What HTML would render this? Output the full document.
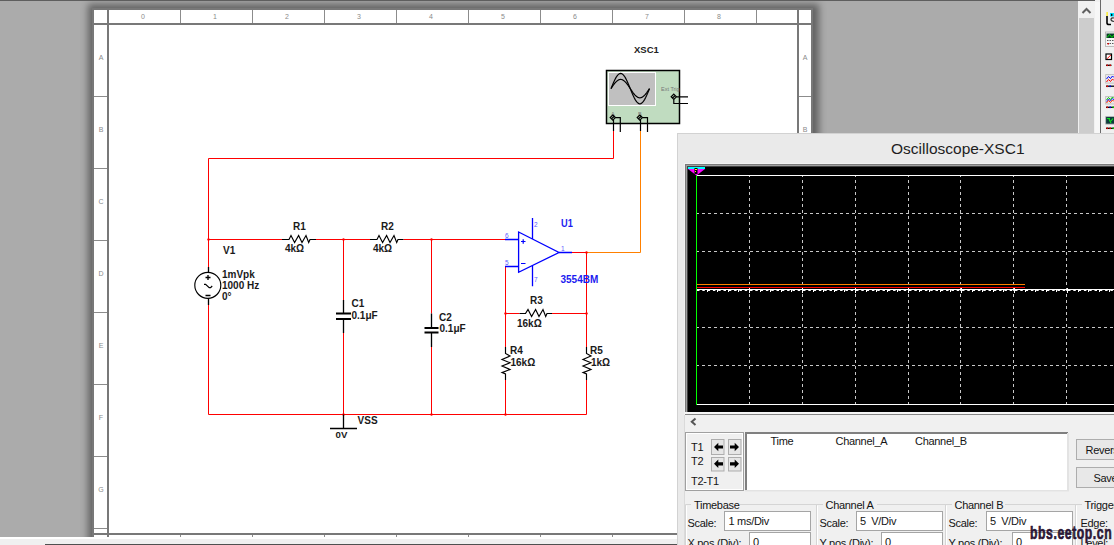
<!DOCTYPE html>
<html><head><meta charset="utf-8">
<style>
html,body{margin:0;padding:0}
body{width:1114px;height:545px;overflow:hidden;position:relative;background:#ababab;font-family:"Liberation Sans",sans-serif}
.abs{position:absolute}
#topbar{left:0;top:0;width:1095px;height:1px;background:#5e5e5e}
#sheetshadow{left:92px;top:8px;width:721px;height:560px;box-shadow:1px 1px 7px 5px rgba(0,0,0,.42);background:#fff}
svg{position:absolute;left:0;top:0}
#bottomstrip{left:0;top:537px;width:1114px;height:8px;background:#f0f0f0;border-top:2px solid #fff;box-sizing:border-box}
#bottomline{left:45px;top:544px;width:1069px;height:1px;background:#505050}
#rpanel{left:1078px;top:0;width:36px;height:545px;background:#f0f0f0}
#scope{left:677px;top:133px;width:460px;height:420px;background:#eaeaea;border:1px solid #d2d2d2;box-sizing:border-box}
.t{position:absolute;font-size:11px;color:#000;white-space:nowrap;line-height:1}
</style></head><body>
<div class="abs" id="sheetshadow"></div>
<div class="abs" id="topbar"></div>
<div class="abs" id="rpanel"></div>
<svg width="1114" height="545" viewBox="0 0 1114 545" font-family="Liberation Sans, sans-serif">
  <!-- sheet border -->
  <rect x="93" y="9" width="719" height="540" fill="#fff" stroke="#787878" stroke-width="2"/>
  <g fill="#787878">
    <rect x="94" y="23" width="717" height="2"/>
    <rect x="107" y="10" width="2" height="527"/>
    <rect x="797" y="10" width="2" height="527"/>
    <rect x="94" y="533" width="717" height="2"/>
  </g>
  <g fill="#8c8c8c">
    <rect x="180" y="10" width="1" height="13"/><rect x="252" y="10" width="1" height="13"/>
    <rect x="324" y="10" width="1" height="13"/><rect x="396" y="10" width="1" height="13"/>
    <rect x="468" y="10" width="1" height="13"/><rect x="540" y="10" width="1" height="13"/>
    <rect x="612" y="10" width="1" height="13"/><rect x="684" y="10" width="1" height="13"/>
    <rect x="756" y="10" width="1" height="13"/>
    <rect x="180" y="535" width="1" height="2"/><rect x="252" y="535" width="1" height="2"/>
    <rect x="324" y="535" width="1" height="2"/><rect x="396" y="535" width="1" height="2"/>
    <rect x="468" y="535" width="1" height="2"/><rect x="540" y="535" width="1" height="2"/>
    <rect x="612" y="535" width="1" height="2"/><rect x="684" y="535" width="1" height="2"/>
    <rect x="756" y="535" width="1" height="2"/>
    <rect x="94" y="96" width="13" height="1"/><rect x="94" y="168" width="13" height="1"/>
    <rect x="94" y="240" width="13" height="1"/><rect x="94" y="312" width="13" height="1"/>
    <rect x="94" y="384" width="13" height="1"/><rect x="94" y="456" width="13" height="1"/>
    <rect x="94" y="528" width="13" height="1"/>
    <rect x="799" y="96" width="12" height="1"/><rect x="799" y="168" width="12" height="1"/>
    <rect x="799" y="240" width="12" height="1"/><rect x="799" y="312" width="12" height="1"/>
    <rect x="799" y="384" width="12" height="1"/><rect x="799" y="456" width="12" height="1"/>
    <rect x="799" y="528" width="12" height="1"/>
  </g>
  <g fill="#8a8a8a" font-size="7" text-anchor="middle">
    <text x="143" y="19">0</text><text x="215" y="19">1</text><text x="287" y="19">2</text>
    <text x="359" y="19">3</text><text x="431" y="19">4</text><text x="503" y="19">5</text>
    <text x="575" y="19">6</text><text x="647" y="19">7</text><text x="719" y="19">8</text>
    <text x="101" y="59.7">A</text><text x="101" y="131.7">B</text><text x="101" y="203.7">C</text>
    <text x="101" y="275.7">D</text><text x="101" y="347.7">E</text><text x="101" y="419.7">F</text>
    <text x="101" y="491.7">G</text>
    <text x="805" y="59.7">A</text><text x="805" y="131.7">B</text>
  </g>

  <!-- wires -->
  <g stroke="#ff0000" stroke-width="1" fill="none">
    <path d="M208.5,158.5 H613.5 V131"/>
    <path d="M208.5,158.5 V267"/>
    <path d="M208.5,305 V414.5 H586.5 V380"/>
    <path d="M208.5,239.5 H282"/>
    <path d="M316,239.5 H370"/>
    <path d="M403.5,239.5 H505"/>
    <path d="M343.5,239.5 V300"/>
    <path d="M343.5,333 V414.5"/>
    <path d="M431.5,239.5 V313.5"/>
    <path d="M431.5,347 V414.5"/>
    <path d="M505.5,266.5 V347"/>
    <path d="M505.5,380 V414.5"/>
    <path d="M505.5,313.5 H519.5"/>
    <path d="M552,313.5 H586.5"/>
    <path d="M572,252.5 H586.5 V347"/>
  </g>
  <path d="M586.5,252.5 H640.5 V131" stroke="#ff8000" stroke-width="1" fill="none"/>
  <g fill="#ff0000">
    <circle cx="208.5" cy="239.5" r="1.2"/><circle cx="343.5" cy="239.5" r="1.2"/>
    <circle cx="431.5" cy="239.5" r="1.2"/><circle cx="586.5" cy="252.5" r="1.2"/>
    <circle cx="505.5" cy="313.5" r="1.2"/><circle cx="586.5" cy="313.5" r="1.2"/>
    <circle cx="343.5" cy="414.5" r="1.2"/><circle cx="431.5" cy="414.5" r="1.2"/>
    <circle cx="505.5" cy="414.5" r="1.2"/>
  </g>

  <!-- black components -->
  <g stroke="#000" stroke-width="1.3" fill="none">
    <path d="M208.5,267 V272 M208.5,298.5 V305"/>
    <circle cx="207.8" cy="285.3" r="13" stroke-width="1.15"/>
    <path d="M205.5,277.5 H210.5 M208,275 V280 M205.5,295.5 H210.5"/>
    <path d="M204,284.3 H205.6 L209.2,287.6 H210.6 L212.2,286" stroke-width="1.2"/>
    <!-- R1 -->
    <path stroke-width="1.15" d="M282,239.5 H289 L291,235.5 L294.6,242.5 L298.6,235.5 L302,242.5 L306,235.5 L308.7,242.5 L310,239.5 H316"/>
    <!-- R2 -->
    <path stroke-width="1.15" d="M370,239.5 H377 L379,235.5 L382.6,242.5 L386.6,235.5 L390,242.5 L394,235.5 L396.7,242.5 L398,239.5 H403.5"/>
    <!-- R3 -->
    <path stroke-width="1.15" d="M519.5,313.5 H525.5 L528,309.5 L531.6,316.5 L535.6,309.5 L539,316.5 L543,309.5 L545.7,316.5 L547,313.5 H552"/>
    <!-- R4 -->
    <path stroke-width="1.15" d="M505.5,347 V353.5 L510,356 L502,359.5 L510,362.8 L502,366 L510,369.5 L502,372.6 L505.5,374 V380"/>
    <!-- R5 -->
    <path stroke-width="1.15" d="M586.5,347 V353.5 L591,356 L583,359.5 L591,362.8 L583,366 L591,369.5 L583,372.6 L586.5,374 V380"/>
    <!-- C1 -->
    <path d="M343.5,300 V313 M343.5,319 V333"/>
    <!-- C2 -->
    <path d="M431.5,313.5 V327.5 M431.5,333 V347"/>
    <!-- ground -->
    <path d="M343.5,414.5 V428.5 M330,428.5 H357"/>
  </g>
  <g fill="#000">
    <rect x="336" y="312.5" width="15" height="2"/><rect x="336" y="318" width="15" height="2"/>
    <rect x="424.5" y="327" width="14" height="2"/><rect x="424.5" y="331.5" width="14" height="2"/>
  </g>
  <g fill="#1a1a1a" font-size="10" font-weight="bold">
    <text x="293" y="230">R1</text>
    <text x="285" y="252">4kΩ</text>
    <text x="381" y="230">R2</text>
    <text x="373" y="252">4kΩ</text>
    <text x="223" y="254">V1</text>
    <text x="222" y="277.5">1mVpk</text>
    <text x="222" y="288.5">1000 Hz</text>
    <text x="222" y="299.5">0°</text>
    <text x="351.5" y="306.5">C1</text>
    <text x="351.5" y="319">0.1μF</text>
    <text x="439" y="320.5">C2</text>
    <text x="439.5" y="332">0.1μF</text>
    <text x="530" y="304">R3</text>
    <text x="517" y="326.5">16kΩ</text>
    <text x="510" y="353.5">R4</text>
    <text x="510.5" y="365.5">16kΩ</text>
    <text x="590" y="353.5">R5</text>
    <text x="591" y="365.5">1kΩ</text>
    <text x="357.5" y="423.6" font-size="10" textLength="20.2" lengthAdjust="spacing">VSS</text>
    <text x="335.6" y="437.7" font-size="9.6" textLength="11.8" lengthAdjust="spacingAndGlyphs">0V</text>
    <text x="634" y="52.5" font-size="9.6" fill="#222" textLength="24.8" lengthAdjust="spacingAndGlyphs">XSC1</text>
  </g>

  <!-- op amp -->
  <g stroke="#0000ff" stroke-width="1.3" fill="none">
    <path d="M518.6,232 L559,252.5 L518.6,272.3 Z"/>
    <path d="M505,239.5 H518.6 M505,266.5 H518.6 M532.5,218 V239 M532.5,266 V286.3 M559,252.5 H572"/>
    <path d="M521,241.5 H525.5 M523.2,239.3 V243.7 M521,263.5 H525.5" stroke-width="1.2"/>
  </g>
  <g fill="#5a5aff" font-size="6.5">
    <text x="505" y="238">6</text><text x="505" y="264.5">5</text>
    <text x="534" y="227">2</text><text x="534" y="282">7</text><text x="561" y="251">1</text>
  </g>
  <g fill="#1c1cf0" font-size="10" font-weight="bold">
    <text x="561" y="227.2" font-size="10" textLength="11.8" lengthAdjust="spacingAndGlyphs">U1</text>
    <text x="560.5" y="282.8">3554BM</text>
  </g>

  <!-- instrument -->
  <rect x="606.5" y="70.5" width="73" height="53" fill="#c0dcc0" stroke="#000" stroke-width="1.5"/>
  <rect x="608.5" y="72.5" width="47" height="33" fill="#c0c0c0" stroke="#fff" stroke-width="1"/>
  <path d="M611.00,88.60 L611.96,86.22 L612.92,83.90 L613.89,81.70 L614.85,79.67 L615.81,77.85 L616.77,76.30 L617.74,75.06 L618.70,74.14 L619.66,73.59 L620.62,73.40 L621.59,73.59 L622.55,74.14 L623.51,75.06 L624.48,76.30 L625.44,77.85 L626.40,79.67 L627.36,81.70 L628.33,83.90 L629.29,86.22 L630.25,88.60 L631.21,90.98 L632.17,93.30 L633.14,95.50 L634.10,97.53 L635.06,99.35 L636.02,100.90 L636.99,102.14 L637.95,103.06 L638.91,103.61 L639.88,103.80 L640.84,103.61 L641.80,103.06 L642.76,102.14 L643.73,100.90 L644.69,99.35 L645.65,97.53 L646.61,95.50 L647.58,93.30 L648.54,90.98 L649.50,88.60" stroke="#000" stroke-width="1.2" fill="none"/>
  <path d="M611.00,88.60 L611.96,87.16 L612.92,85.76 L613.89,84.42 L614.85,83.19 L615.81,82.09 L616.77,81.16 L617.74,80.40 L618.70,79.85 L619.66,79.51 L620.62,79.40 L621.59,79.51 L622.55,79.85 L623.51,80.40 L624.48,81.16 L625.44,82.09 L626.40,83.19 L627.36,84.42 L628.33,85.76 L629.29,87.16 L630.25,88.60 L631.21,90.04 L632.17,91.44 L633.14,92.78 L634.10,94.01 L635.06,95.11 L636.02,96.04 L636.99,96.80 L637.95,97.35 L638.91,97.69 L639.88,97.80 L640.84,97.69 L641.80,97.35 L642.76,96.80 L643.73,96.04 L644.69,95.11 L645.65,94.01 L646.61,92.78 L647.58,91.44 L648.54,90.04 L649.50,88.60" stroke="#000" stroke-width="1.2" fill="none"/>
  <g fill="#777" font-size="5.5">
    <text x="661" y="91">Ext Trig</text>
    <text x="611" y="115.5">A</text><text x="638" y="115.5">B</text>
  </g>
  <g stroke="#000" stroke-width="1.2" fill="none">
    <path d="M612.8,115 L615.4,117.6 L612.8,120.2 L610.2,117.6 Z M611.3,119 L614.5,116"/>
    <path d="M639.8,115 L642.4,117.6 L639.8,120.2 L637.2,117.6 Z M638.3,119 L641.5,116"/>
    <path d="M673.8,94.2 L676.4,96.8 L673.8,99.4 L671.2,96.8 Z M672.3,98.2 L675.5,95.3"/>
    <path d="M613.5,120 V131 M615.4,117.6 H620.3 V132 M642.4,117.6 H647.5 V132 M640.5,120 V131"/>
    <path d="M676.4,96.8 H688 M673.8,99.4 V103.5 H688"/>
  </g>
</svg>

<div class="abs" id="bottomstrip"></div>
<div class="abs" id="bottomline"></div>

<!-- right scrollbar & panel -->
<svg width="1114" height="545" style="pointer-events:none">
  <rect x="1078" y="1" width="17" height="536" fill="#f0f0f0"/>
  <rect x="1078" y="0" width="17" height="1" fill="#5e5e5e"/>
  <rect x="1079" y="18" width="15" height="519" fill="#cdcdcd"/>
  <path d="M1082.5,13 L1086.5,9 L1090.5,13" stroke="#606060" stroke-width="2" fill="none"/>
  <rect x="1095" y="2" width="5" height="535" fill="#f7f7f7"/>
  <rect x="1100" y="0" width="1" height="537" fill="#696969"/>
  <rect x="1101" y="0" width="13" height="537" fill="#f0f0f0"/>
  <!-- icons -->
  <rect x="1106.5" y="12" width="1.2" height="4" fill="#ffee00"/>
  <path d="M1107,16 V23 Q1107,24.5 1109,24.5 H1111" stroke="#000" stroke-width="1.6" fill="none"/>
  <rect x="1110" y="13" width="4" height="3.5" fill="#00e0ff"/>
  <path d="M1111,13.5 L1113,15 L1111,16.2 Z" fill="#000"/>
  <path d="M1114,18 Q1111,17.5 1111,19.5 Q1111,21 1114,21.5" stroke="#333" stroke-width="1.2" fill="none"/>
  <rect x="1105.5" y="32" width="9" height="14.5" fill="#f4f4f4" stroke="#b0b0b0" stroke-width="0.8"/>
  <rect x="1106.5" y="33.5" width="8" height="4.5" fill="#0a3a2a"/>
  <path d="M1107,37.5 L1109.5,34.5 L1112,37.5 L1114,35" stroke="#00dd00" stroke-width="1" fill="none"/>
  <path d="M1107,40.5 H1114 M1107,43.5 H1114" stroke="#333" stroke-width="0.8" stroke-dasharray="1.5 1"/>
  <rect x="1107.5" y="43" width="1.5" height="1.5" fill="#e00000"/>
  <rect x="1106" y="54" width="5.5" height="5.5" fill="#fff" stroke="#000" stroke-width="1.2"/>
  <path d="M1107,58.8 L1110.8,55" stroke="#ff0000" stroke-width="1"/>
  <path d="M1106,65.3 H1111.5" stroke="#000" stroke-width="1.3"/>
  <rect x="1106.5" y="64.5" width="1.5" height="1.6" fill="#e00000"/><rect x="1109.5" y="64.5" width="1.5" height="1.6" fill="#e00000"/>
  <rect x="1105.7" y="74.6" width="9" height="8.5" fill="#e8e8e8" stroke="#b8b8b8" stroke-width="0.8"/>
  <path d="M1106.5,79 L1108.5,76.5 L1110.5,78.5 L1112.5,76 L1114,77.5" stroke="#0000ff" stroke-width="1" fill="none"/>
  <path d="M1106.5,82 L1108.5,79.5 L1110.5,81.5 L1112.5,79 L1114,80.5" stroke="#ff0000" stroke-width="1" fill="none"/>
  <path d="M1106,86.2 H1114" stroke="#000" stroke-width="1.3"/>
  <rect x="1106.5" y="85.5" width="1.5" height="1.6" fill="#e00000"/><rect x="1109.5" y="85.5" width="1.5" height="1.6" fill="#0000e0"/>
  <rect x="1105.7" y="96.5" width="9" height="7.5" fill="#e8e8e8" stroke="#b8b8b8" stroke-width="0.8"/>
  <path d="M1106.5,100 L1108.5,97.5 L1110.5,99.5 L1112.5,97 L1114,98.5" stroke="#00cc00" stroke-width="1" fill="none"/>
  <path d="M1106.5,101.5 L1108.5,99 L1110.5,101 L1112.5,98.5 L1114,100" stroke="#0000ff" stroke-width="0.8" fill="none"/>
  <path d="M1106.5,103 L1108.5,100.5 L1110.5,102.5 L1112.5,100 L1114,101.5" stroke="#ff3000" stroke-width="1" fill="none"/>
  <path d="M1106,107.3 H1114" stroke="#000" stroke-width="1.3"/>
  <rect x="1106.5" y="106.5" width="1.5" height="1.6" fill="#e00000"/><rect x="1109.5" y="106.5" width="1.5" height="1.6" fill="#0000e0"/><rect x="1112.5" y="106.5" width="1.5" height="1.6" fill="#00c000"/>
  <rect x="1105.7" y="116.6" width="9" height="7.5" fill="#0e3c3c" stroke="#b8b8b8" stroke-width="0.8"/>
  <path d="M1107,118.5 H1110 M1109,119 L1111,123 M1113,118.5 L1111,121" stroke="#10e020" stroke-width="1.2" fill="none"/>
  <path d="M1106,128.3 H1114" stroke="#000" stroke-width="1.3"/>
  <rect x="1106.5" y="127.5" width="1.5" height="1.6" fill="#e00000"/><rect x="1109.5" y="127.5" width="1.5" height="1.6" fill="#e00000"/><rect x="1112.5" y="127.5" width="1.5" height="1.6" fill="#00c000"/>
</svg>

<div class="abs" id="scope"></div>
<svg width="1114" height="545">
  <!-- scope screen frame -->
  <rect x="684" y="163" width="440" height="253" fill="#f2f2f2"/>
  <rect x="685" y="164" width="440" height="250" fill="#7a7a7a"/>
  <rect x="686" y="165" width="440" height="247" fill="#a0a0a0"/>
  <rect x="687" y="166" width="440" height="246" fill="#404040"/>
  <rect x="688" y="167" width="440" height="245" fill="#000"/>
  <rect x="685" y="412" width="440" height="2" fill="#f6f6f6"/>
  <rect x="685" y="414" width="440" height="1" fill="#858585"/>
  <!-- grid -->
  <g stroke="#c8c8c8" stroke-width="1" stroke-dasharray="3 3" fill="none">
    <path d="M696,213.5 H1114 M696,251.5 H1114 M696,327.5 H1114 M696,365.5 H1114"/>
    <path stroke-dashoffset="1" d="M749.5,175 V404 M802.5,175 V404 M855.5,175 V404 M908.5,175 V404 M960.5,175 V404 M1013.5,175 V404 M1066.5,175 V404"/>
  </g>
  <rect x="696" y="175" width="420" height="1" fill="#fff"/>
  <rect x="696" y="404" width="420" height="1" fill="#fff"/>
  <rect x="696" y="175" width="1" height="230" fill="#00ff00"/>
  <rect x="697" y="284" width="328" height="1" fill="#ff8000"/>
  <rect x="697" y="287" width="328" height="1" fill="#ff0000"/>
  <rect x="697" y="289" width="420" height="1" fill="#fff"/>
  <path d="M707.5,290 V292 M717.5,290 V292 M728.5,290 V292 M738.5,290 V292 M749.5,288 V293 M760.5,290 V292 M770.5,290 V292 M781.5,290 V292 M791.5,290 V292 M802.5,288 V293 M813.5,290 V292 M823.5,290 V292 M834.5,290 V292 M844.5,290 V292 M855.5,288 V293 M866.5,290 V292 M876.5,290 V292 M887.5,290 V292 M897.5,290 V292 M908.5,288 V293 M919.5,290 V292 M929.5,290 V292 M940.5,290 V292 M950.5,290 V292 M961.5,288 V293 M972.5,290 V292 M982.5,290 V292 M993.5,290 V292 M1003.5,290 V292 M1014.5,288 V293 M1025.5,290 V292 M1035.5,290 V292 M1046.5,290 V292 M1056.5,290 V292 M1067.5,288 V293 M1078.5,290 V292 M1088.5,290 V292 M1099.5,290 V292 M1109.5,290 V292" stroke="#fff" stroke-width="1"/>
  <path d="M697,290.5 H1114" stroke="#fff" stroke-width="1" stroke-dasharray="2.5 2.8"/>
  <!-- cursor marker -->
  <path d="M688,167 H705 V169 L696.5,175.5 L688,169 Z" fill="#ff00ff"/>
  <rect x="688" y="167" width="17" height="2" fill="#00ffff"/>
  <rect x="694.5" y="168" width="3" height="6" fill="#000"/>
  <rect x="695" y="169" width="2" height="1" fill="#ffff00"/>
  <rect x="695" y="171" width="1" height="1" fill="#ffff00"/>
  
</svg>

<svg width="1114" height="545" font-family="Liberation Sans, sans-serif">
  <text x="891" y="153.8" font-size="15.5" fill="#1e1e1e">Oscilloscope-XSC1</text>
  <!-- lower panel bg -->
  <rect x="684.5" y="415" width="430" height="130" fill="#f0f0f0"/>
  <rect x="684" y="415" width="1" height="130" fill="#dadada"/>
  <path d="M695.5,418.5 L691.8,421.8 L695.5,425" stroke="#555" stroke-width="2" fill="none"/>
  <!-- cursor box -->
  <rect x="685.5" y="432.5" width="58" height="58" fill="#f0f0f0" stroke="#a0a0a0" stroke-width="1"/>
  <rect x="686.5" y="433.5" width="56" height="56" fill="none" stroke="#fff" stroke-width="1"/>
  <g fill="#e6e6e6" stroke="#adadad" stroke-width="1">
    <rect x="711.5" y="439.5" width="12.5" height="15"/><rect x="728.5" y="439.5" width="12.5" height="15"/>
    <rect x="711.5" y="457.5" width="12.5" height="13.5"/><rect x="728.5" y="457.5" width="12.5" height="13.5"/>
  </g>
  <g fill="#000"><path d="M714,447 L718.3,442.8 V445.4 H723 V448.6 H718.3 V451.2 Z"/><path d="M739,447 L734.7,442.8 V445.4 H730 V448.6 H734.7 V451.2 Z"/><path d="M714,463.8 L718.3,459.6 V462.2 H723 V465.40000000000003 H718.3 V468.0 Z"/><path d="M739,463.8 L734.7,459.6 V462.2 H730 V465.40000000000003 H734.7 V468.0 Z"/></g>
  <!-- readout box -->
  <rect x="745" y="432" width="24" height="59" fill="#fff"/>
  <rect x="745" y="432" width="323" height="59" fill="#fff"/>
  <rect x="745" y="432" width="323" height="2" fill="#808080"/>
  <rect x="745" y="432" width="2" height="59" fill="#808080"/>
  <rect x="1067" y="433" width="2" height="58" fill="#e3e3e3"/>
  <rect x="745" y="490" width="324" height="1.5" fill="#e3e3e3"/>
  <!-- buttons -->
  <g stroke="#adadad" stroke-width="1">
    <rect x="1076.5" y="439.5" width="60" height="20" fill="#e8e8e8"/>
    <rect x="1076.5" y="467.5" width="60" height="20" fill="#e8e8e8"/>
  </g>
  <!-- group boxes -->
  <g stroke="#d5d5d5" stroke-width="1" fill="none">
    <path d="M691,504.5 H685.5 V545 M740,504.5 H823 M877,504.5 H952 M1005,504.5 H1082"/>
    <path d="M816.5,505 V545 M945.5,505 V545 M1075.5,505 V545"/>
  </g>
  <g stroke="#fff" stroke-width="1" fill="none">
    <path d="M686.5,545 V505.5 M817.5,505.5 V545 M946.5,505.5 V545 M1076.5,505.5 V545"/>
  </g>
  <!-- inputs -->
  <g fill="#fff" stroke="#a5a5a5" stroke-width="1">
    <rect x="724.5" y="511.5" width="86" height="19"/>
    <rect x="749.5" y="532.5" width="61" height="19"/>
    <rect x="856.5" y="511.5" width="86" height="19"/>
    <rect x="881.5" y="532.5" width="61" height="19"/>
    <rect x="986.5" y="511.5" width="86" height="19"/>
    <rect x="1012.5" y="532.5" width="60" height="19"/>
  </g>
  <g font-size="11" fill="#141414" letter-spacing="-0.3">
    <text x="691" y="451">T1</text>
    <text x="691" y="465">T2</text>
    <text x="691" y="485">T2-T1</text>
    <text x="770.5" y="445">Time</text>
    <text x="835.5" y="445">Channel_A</text>
    <text x="915" y="445">Channel_B</text>
    <text x="1085.5" y="454">Reverse</text>
    <text x="1093.5" y="482">Save</text>
    <text x="694" y="509">Timebase</text>
    <text x="825.5" y="509">Channel A</text>
    <text x="954.5" y="509">Channel B</text>
    <text x="1084.5" y="508.5">Trigger</text>
    <text x="687.5" y="527">Scale:</text>
    <text x="819.5" y="527">Scale:</text>
    <text x="948.5" y="527">Scale:</text>
    <text x="1080.5" y="526.5">Edge:</text>
    <text x="728.5" y="525">1 ms/Div</text>
    <text x="860" y="525">5&#160; V/Div</text>
    <text x="990" y="525">5&#160; V/Div</text>
    <text x="687.5" y="547">X pos (Div):</text>
    <text x="819.5" y="547">Y pos (Div):</text>
    <text x="948.5" y="547">Y pos (Div):</text>
    <text x="1080.5" y="546.5">Level:</text>
    <text x="753" y="546">0</text>
    <text x="885" y="546">0</text>
    <text x="1016" y="546">0</text>
  </g>
  <text x="0" y="0" font-size="17.5" font-weight="bold" letter-spacing="0.8" fill="#220c2c" fill-opacity="0.94" stroke="#220c2c" stroke-width="0.7" stroke-opacity="0.94" transform="translate(1030,538.8) scale(0.7,1)">bbs.eetop.cn</text>
</svg>
</body></html>
